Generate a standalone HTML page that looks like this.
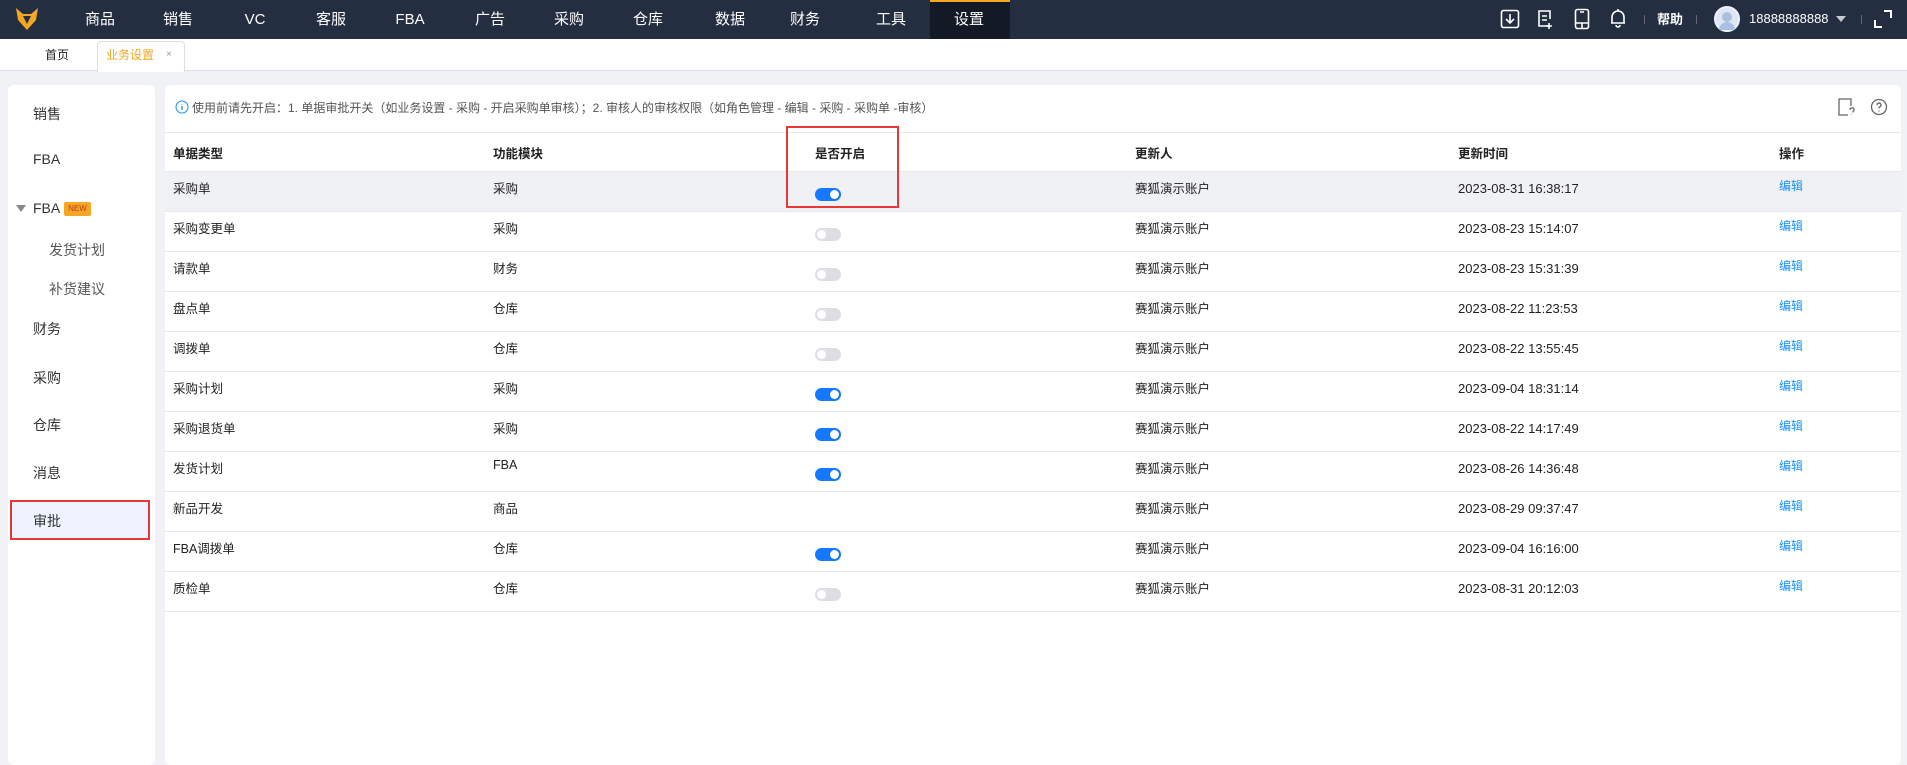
<!DOCTYPE html>
<html><head><meta charset="utf-8"><style>
*{margin:0;padding:0;box-sizing:border-box}
body{width:1907px;height:746px;overflow:hidden;background:#f0f2f5;font-family:"Liberation Sans","Noto Sans CJK SC",sans-serif;position:relative;color:#222}
.a{position:absolute;white-space:nowrap}
.nav{left:0;top:0;width:1907px;height:39px;background:#232e40}
.nv{top:0;height:39px;line-height:39px;color:#fff;font-size:15px;transform:translateX(-50%)}
.tabbar{left:0;top:39px;width:1907px;height:32px;background:#fff;border-bottom:1px solid #dcdfe6}
.side{left:8px;top:85px;width:147px;height:680px;background:#fff;border-radius:6px}
.si{font-size:14px;color:#333}
.main{left:165px;top:85px;width:1736px;height:680px;background:#fff;border-radius:6px}
.td{font-size:12.5px;color:#222}
.th{font-size:12.5px;font-weight:bold;color:#222}
.tg{width:26px;height:13px;border-radius:7px;background:#dcdee3}
.tg::after{content:"";position:absolute;top:2px;left:2px;width:9px;height:9px;border-radius:50%;background:#fff}
.tg.on{background:#1677ff}
.tg.on::after{left:15px}
.ed{font-size:12px;color:#1890ff}
.line{height:1px;background:#e8e9ec;left:165px;width:1736px}
</style></head><body>
<div class="a nav"></div>
<svg class="a" style="left:14px;top:6px" width="26" height="26" viewBox="0 0 26 26"><path d="M2 2 L9 8 L17 8 L24 2 L22 14 L13 24 L4 14 Z" fill="#f5a623"/><path d="M9 10 L13 18 L17 10 Z" fill="#232e40"/></svg>
<div class="a" style="left:930px;top:0;width:80px;height:39px;background:#131a26;border-top:2px solid #f5a623"></div>
<div class="a nv" style="left:100px">商品</div>
<div class="a nv" style="left:178px">销售</div>
<div class="a nv" style="left:255px">VC</div>
<div class="a nv" style="left:331px">客服</div>
<div class="a nv" style="left:410px">FBA</div>
<div class="a nv" style="left:490px">广告</div>
<div class="a nv" style="left:569px">采购</div>
<div class="a nv" style="left:648px">仓库</div>
<div class="a nv" style="left:730px">数据</div>
<div class="a nv" style="left:805px">财务</div>
<div class="a nv" style="left:891px">工具</div>
<div class="a nv" style="left:969px">设置</div>
<svg class="a" style="left:1500px;top:9px" width="20" height="20" viewBox="0 0 20 20" fill="none" stroke="#fff" stroke-width="1.6"><rect x="1.5" y="1.5" width="17" height="17" rx="2"/><path d="M10 5v9M6 10l4 4 4-4"/></svg>
<svg class="a" style="left:1537px;top:9px" width="18" height="22" viewBox="0 0 18 22" fill="none" stroke="#fff" stroke-width="1.6"><path d="M12 17H2V2h11v8"/><path d="M5 7h5M5 11h5M12 14v6M9 17h6"/></svg>
<svg class="a" style="left:1574px;top:8px" width="16" height="22" viewBox="0 0 16 22" fill="none" stroke="#fff" stroke-width="1.6"><rect x="1.5" y="1.5" width="13" height="19" rx="2"/><path d="M2 15h12M6 4h4M8 15v5"/></svg>
<svg class="a" style="left:1609px;top:8px" width="18" height="20" viewBox="0 0 18 20" fill="none" stroke="#fff" stroke-width="1.6"><path d="M3 15V9a6 6 0 0 1 12 0v6H2h14M7 17a2 2 0 0 0 4 0M9 1v2"/></svg>
<div class="a" style="left:1644px;top:15px;width:1px;height:9px;background:#667"></div>
<div class="a" style="left:1657px;top:0;line-height:39px;color:#fff;font-size:13px;font-weight:bold">帮助</div>
<div class="a" style="left:1696px;top:15px;width:1px;height:9px;background:#667"></div>
<div class="a" style="left:1714px;top:6px;width:26px;height:26px;border-radius:50%;background:#dde6f2;border:2px solid #eef"><div class="a" style="left:6px;top:4px;width:10px;height:10px;border-radius:50%;background:#a9c0e0"></div><div class="a" style="left:3px;top:14px;width:16px;height:8px;border-radius:8px 8px 0 0;background:#a9c0e0"></div></div>
<div class="a" style="left:1749px;top:0;line-height:37px;color:#fff;font-size:13px">18888888888</div>
<div class="a" style="left:1836px;top:16px;border-left:5px solid transparent;border-right:5px solid transparent;border-top:6px solid #c5cad3"></div>
<div class="a" style="left:1861px;top:15px;width:1px;height:9px;background:#667"></div>
<svg class="a" style="left:1874px;top:10px" width="18" height="18" viewBox="0 0 18 18" fill="none" stroke="#fff" stroke-width="2"><path d="M10 1h7v7M1 10v7h7"/></svg>

<div class="a tabbar"></div>
<div class="a" style="left:45px;top:39px;line-height:32px;font-size:12px">首页</div>
<div class="a" style="left:97px;top:41px;width:88px;height:31px;background:#fff;border:1px solid #dcdfe6;border-bottom:none;border-radius:4px 4px 0 0"></div>
<div class="a" style="left:106px;top:39px;line-height:32px;font-size:12px;color:#f5a623">业务设置</div>
<div class="a" style="left:166px;top:39px;line-height:32px;font-size:10px;color:#999">×</div>

<div class="a side"></div>
<div class="a si" style="left:33px;top:104px">销售</div>
<div class="a si" style="left:33px;top:151px">FBA</div>
<div class="a" style="left:16px;top:205px;border-left:5px solid transparent;border-right:5px solid transparent;border-top:7px solid #888"></div>
<div class="a si" style="left:33px;top:200px">FBA</div>
<div class="a" style="left:64px;top:202px;width:27px;height:14px;background:#f5a623;color:#c0392b;font-size:8px;line-height:14px;text-align:center;border-radius:2px">NEW</div>
<div class="a si" style="left:49px;top:240px;color:#555">发货计划</div>
<div class="a si" style="left:49px;top:279px;color:#555">补货建议</div>
<div class="a si" style="left:33px;top:319px">财务</div>
<div class="a si" style="left:33px;top:368px">采购</div>
<div class="a si" style="left:33px;top:415px">仓库</div>
<div class="a si" style="left:33px;top:463px">消息</div>
<div class="a" style="left:10px;top:500px;width:140px;height:40px;background:#eef3ff;border:2px solid #e53935"></div>
<div class="a si" style="left:33px;top:511px">审批</div>

<div class="a main"></div>
<svg class="a" style="left:175px;top:100px" width="14" height="14" viewBox="0 0 14 14"><circle cx="7" cy="7" r="6" fill="none" stroke="#1890ff"/><path d="M7 6v4M7 4v.5" stroke="#1890ff" stroke-width="1.3"/></svg>
<div class="a" style="left:192px;top:99px;font-size:12px;color:#555">使用前请先开启：1. 单据审批开关（如业务设置 - 采购 - 开启采购单审核）；2. 审核人的审核权限（如角色管理 - 编辑 - 采购 - 采购单 -审核）</div>
<svg class="a" style="left:1838px;top:98px" width="18" height="18" viewBox="0 0 18 18" fill="none" stroke="#666" stroke-width="1.3"><path d="M13 8V1H1v16h9"/><path d="M12 12a2 2 0 1 1 3 1.5v1M13.5 16.5v.5"/></svg>
<svg class="a" style="left:1870px;top:98px" width="18" height="18" viewBox="0 0 18 18" fill="none" stroke="#666" stroke-width="1.3"><circle cx="9" cy="9" r="7.5"/><path d="M7 7a2 2 0 1 1 2.5 2c-.5.2-.5.6-.5 1.5M9 12.5v1"/></svg>

<div class="a line" style="top:132px"></div>
<div class="a th" style="left:173px;top:143px">单据类型</div>
<div class="a th" style="left:493px;top:143px">功能模块</div>
<div class="a th" style="left:815px;top:143px">是否开启</div>
<div class="a th" style="left:1135px;top:143px">更新人</div>
<div class="a th" style="left:1458px;top:143px">更新时间</div>
<div class="a th" style="left:1779px;top:143px">操作</div>
<div class="a line" style="top:171px"></div>
<div class="a" style="left:165px;top:172px;width:1736px;height:39px;background:#f0f1f5"></div>

<div id="rows"></div>
<script>
var d=[["采购单","采购",1,"2023-08-31 16:38:17"],["采购变更单","采购",0,"2023-08-23 15:14:07"],["请款单","财务",0,"2023-08-23 15:31:39"],["盘点单","仓库",0,"2023-08-22 11:23:53"],["调拨单","仓库",0,"2023-08-22 13:55:45"],["采购计划","采购",1,"2023-09-04 18:31:14"],["采购退货单","采购",1,"2023-08-22 14:17:49"],["发货计划","FBA",1,"2023-08-26 14:36:48"],["新品开发","商品",-1,"2023-08-29 09:37:47"],["FBA调拨单","仓库",1,"2023-09-04 16:16:00"],["质检单","仓库",0,"2023-08-31 20:12:03"]];
var h="";d.forEach(function(r,i){var t=171+i*40;
h+='<div class="a td" style="left:173px;top:'+(t+7)+'px">'+r[0]+'</div><div class="a td" style="left:493px;top:'+(t+7)+'px">'+r[1]+'</div>';
if(r[2]>=0)h+='<div class="a tg'+(r[2]?' on':'')+'" style="left:815px;top:'+(t+17)+'px"></div>';
h+='<div class="a td" style="left:1135px;top:'+(t+7)+'px">赛狐演示账户</div><div class="a td" style="left:1458px;top:'+(t+10)+'px;font-size:13px">'+r[3]+'</div><div class="a ed" style="left:1779px;top:'+(t+6)+'px">编辑</div><div class="a line" style="top:'+(t+40)+'px"></div>';});
document.getElementById("rows").innerHTML=h;
</script>
<div class="a" style="left:786px;top:126px;width:113px;height:82px;border:2px solid #e53935"></div>
</body></html>
